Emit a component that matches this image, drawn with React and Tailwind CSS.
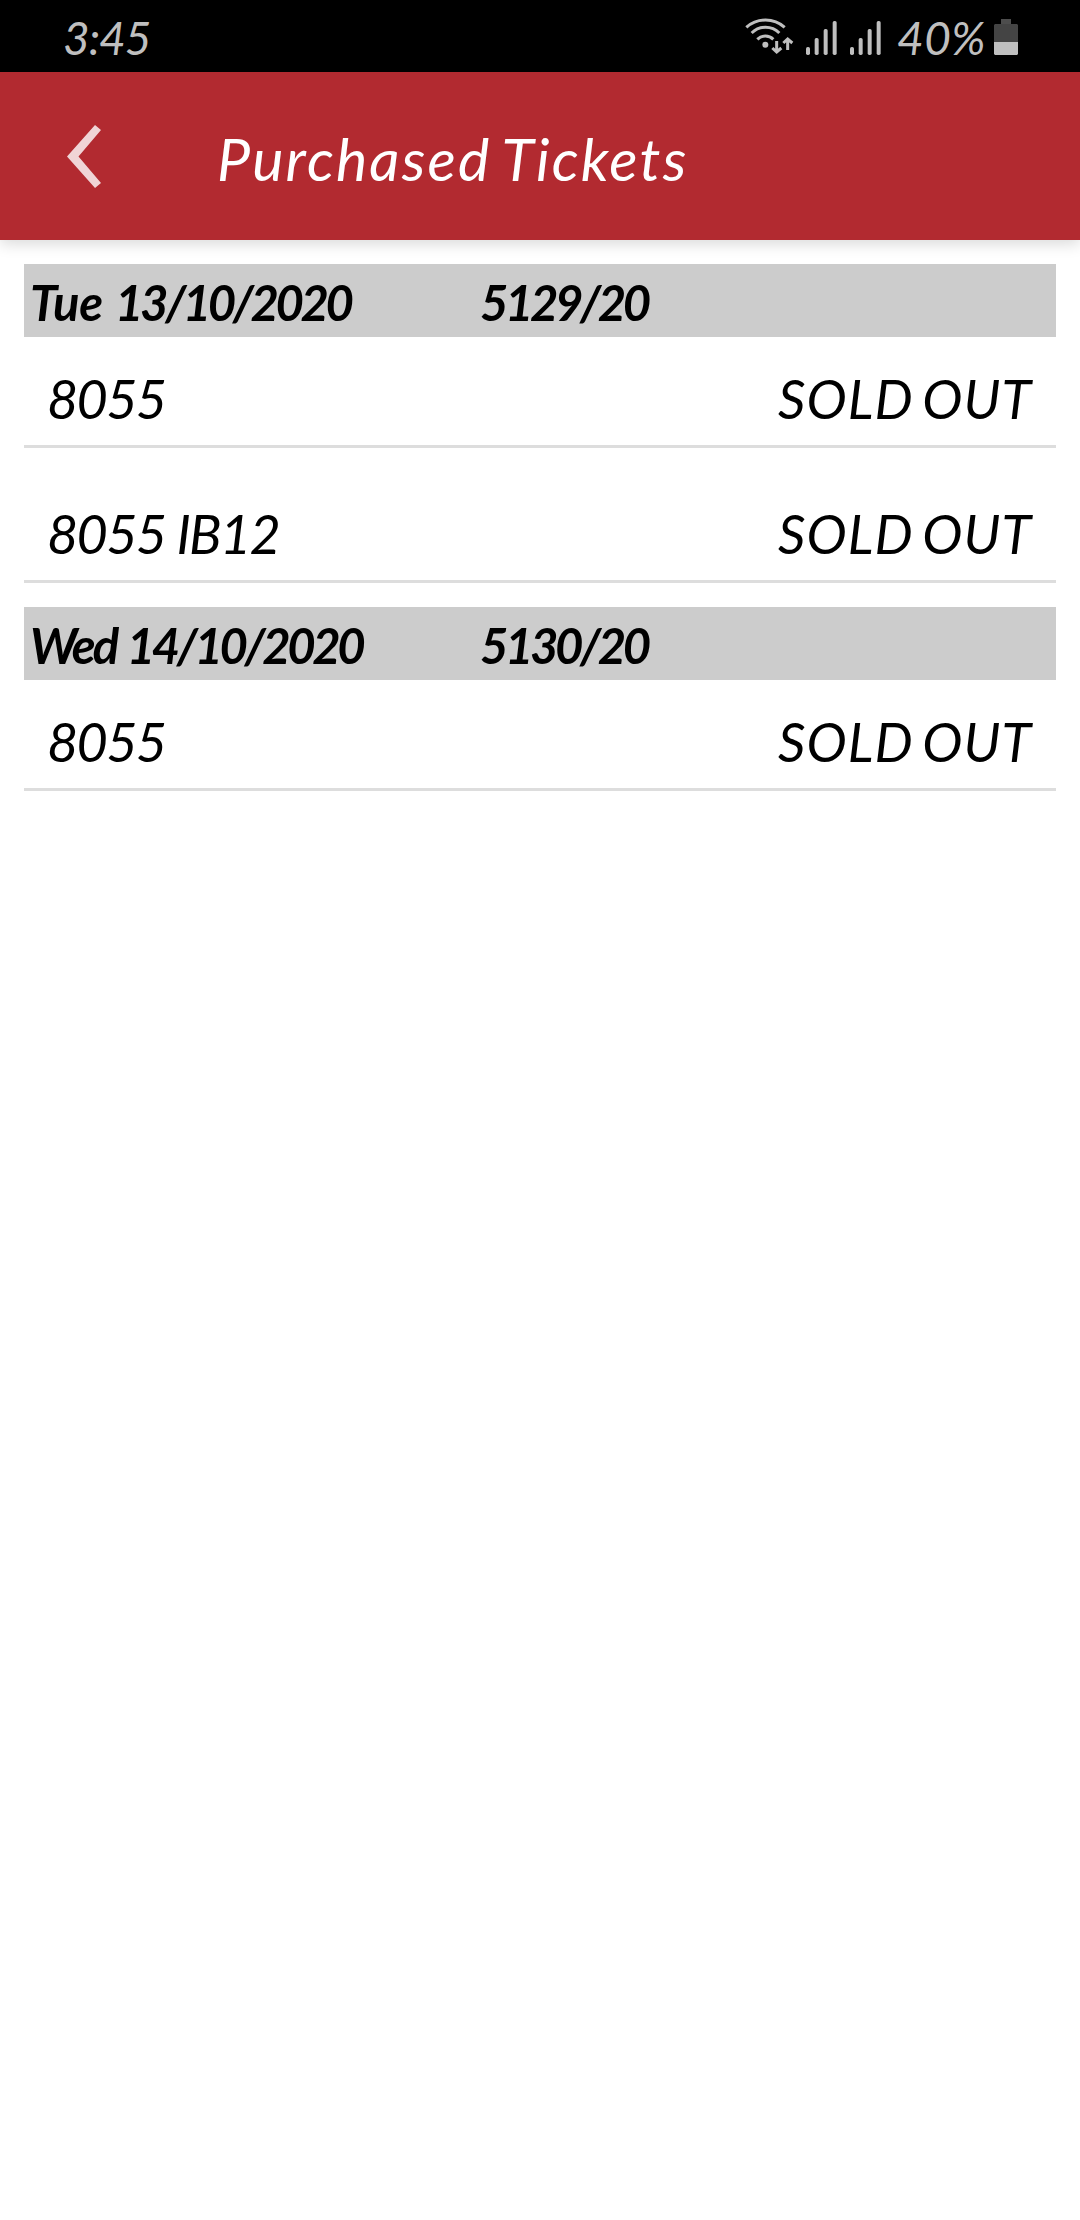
const groups = [
  {
    day: 'Tue',
    date: '13/10/2020',
    draw: '5129/20',
    dayClass: 'mr-1 tracking-[-0.4px]',
    tickets: [
      { name: '8055', status: 'SOLD OUT' },
      { name: '8055 IB12', status: 'SOLD OUT' },
    ],
  },
  {
    day: 'Wed',
    date: '14/10/2020',
    draw: '5130/20',
    dayClass: 'mr-0.5 tracking-[-2.9px]',
    tickets: [{ name: '8055', status: 'SOLD OUT' }],
  },
];

function WifiIcon() {
  return (
    <svg className="h-[38px] w-[50px]" viewBox="72 54 150 114" fill="none" stroke="#bfbfbf" strokeWidth="9">
      <path d="M79 85A86 86 0 0 1 194 85" />
      <path d="M95 102A58 58 0 0 1 178 102" />
      <path d="M112 121A34 34 0 0 1 160 121" />
      <circle cx="136" cy="137" r="9" fill="#bfbfbf" stroke="none" />
      <path d="M170 126V156M157 147L170 159L184 147" strokeWidth="9" />
      <path d="M203 153V122M190 132L203 120L217 132" strokeWidth="9" />
    </svg>
  );
}

function SignalIcon() {
  return (
    <svg className="h-[34px] w-[31px]" viewBox="257 63 93 102" fill="#bfbfbf">
      <rect x="257" y="141" width="12" height="24" rx="5" />
      <rect x="283" y="114" width="12" height="51" rx="5" />
      <rect x="310" y="87" width="12" height="78" rx="5" />
      <rect x="337" y="63" width="12" height="102" rx="5" />
    </svg>
  );
}

function BatteryIcon() {
  return (
    <svg className="mt-0.5 h-9 w-6" viewBox="0 0 24 36">
      <path d="M7 0H17V5H7Z" fill="#4d4d4d" />
      <path d="M1 5H23L24 6V23H0V6Z" fill="#444444" />
      <path d="M0 23H24V35L23 36H1L0 35Z" fill="#bfbfbf" />
    </svg>
  );
}

function StatusBar() {
  return (
    <div className="flex h-[72px] items-center justify-between bg-black pr-[62px] pl-[63px] text-[46px] leading-none text-[#bfbfbf]">
      <span className="pt-1 tracking-[-1px]">3:45</span>
      <div className="flex items-center">
        <WifiIcon />
        <div className="ml-3 flex gap-[13px] pt-1">
          <SignalIcon />
          <SignalIcon />
        </div>
        <span className="ml-4 w-[97px] pt-1 tracking-[0.5px] whitespace-nowrap">40%</span>
        <BatteryIcon />
      </div>
    </div>
  );
}

function Header() {
  return (
    <header className="flex h-[168px] items-center bg-[#b22a30] pl-[67px] text-white shadow-[0_4px_14px_rgba(0,0,0,0.15)]">
      <svg className="h-[63px] w-[34px]" viewBox="0 0 34 63" fill="#f0d4d6">
        <path d="M28 0L34 5L11.5 31.5L34 58L28 63L0 31.5Z" />
      </svg>
      <h1 className="ml-[116px] pt-1 text-[59px] leading-none tracking-[2.2px] [word-spacing:-4px] whitespace-nowrap">
        Purchased Tickets
      </h1>
    </header>
  );
}

function TicketRow({ name, status }) {
  return (
    <div className="flex h-[111px] items-center justify-between border-b-[3px] border-[#dddddd] pt-4 pr-6 pl-[23px] text-[54px] leading-none whitespace-nowrap">
      <span className="tracking-[-1.7px]">{name}</span>
      <span className="tracking-[1px] [word-spacing:-5px]">{status}</span>
    </div>
  );
}

function TicketGroup({ group }) {
  return (
    <section>
      <div className="flex h-[73px] items-center bg-[#cccccc] pt-[3px] pl-[6px] text-[49px] leading-none font-bold whitespace-nowrap">
        <span className="w-[450px] tracking-[-2.3px]">
          <span className={group.dayClass}>{group.day}</span>{' '}
          <span className="tracking-[-3.4px]">{group.date}</span>
        </span>
        <span className="tracking-[-3.4px]">{group.draw}</span>
      </div>
      <div className="flex flex-col gap-6">
        {group.tickets.map((t) => (
          <TicketRow key={t.name} {...t} />
        ))}
      </div>
    </section>
  );
}

export default function App() {
  return (
    <div className="min-h-[2220px] w-[1080px] overflow-hidden bg-white font-['Lato',sans-serif] text-black italic">
      <StatusBar />
      <Header />
      <main className="flex flex-col gap-6 p-6">
        {groups.map((g) => (
          <TicketGroup key={g.date} group={g} />
        ))}
      </main>
    </div>
  );
}
